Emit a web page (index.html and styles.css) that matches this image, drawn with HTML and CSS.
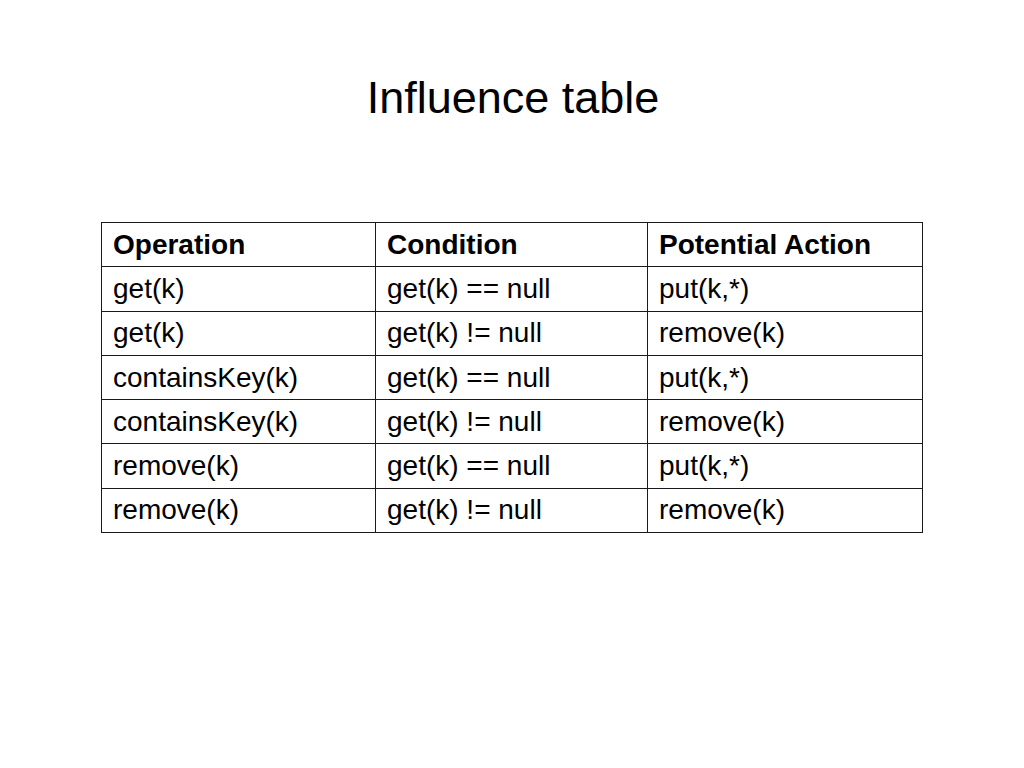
FILE: index.html
```html
<!DOCTYPE html>
<html>
<head>
<meta charset="utf-8">
<link rel="stylesheet" href="styles.css">
</head>
<body>
<div class="slide">
  <h1 class="title">Influence table</h1>
  <table class="influence">
    <colgroup><col class="c1"><col class="c2"><col class="c3"></colgroup>
    <thead>
      <tr><th>Operation</th><th>Condition</th><th>Potential Action</th></tr>
    </thead>
    <tbody>
      <tr><td>get(k)</td><td>get(k) == null</td><td>put(k,*)</td></tr>
      <tr><td>get(k)</td><td>get(k) != null</td><td>remove(k)</td></tr>
      <tr><td>containsKey(k)</td><td>get(k) == null</td><td>put(k,*)</td></tr>
      <tr><td>containsKey(k)</td><td>get(k) != null</td><td>remove(k)</td></tr>
      <tr><td>remove(k)</td><td>get(k) == null</td><td>put(k,*)</td></tr>
      <tr><td>remove(k)</td><td>get(k) != null</td><td>remove(k)</td></tr>
    </tbody>
  </table>
</div>
</body>
</html>
```

FILE: styles.css
```css
html, body {
  margin: 0;
  padding: 0;
  background: #ffffff;
}
body {
  font-family: "Liberation Sans", Arial, sans-serif;
  color: #000;
}
.slide {
  width: 1024px;
  height: 768px;
  display: flex;
  flex-direction: column;
  align-items: center;
}
.title {
  margin: 72px 0 0 0;
  font-size: 45px;
  font-weight: normal;
  line-height: 51px;
  text-align: center;
  padding-left: 2px;
}
.influence {
  margin-top: 99px;
  width: 821px;
  border-collapse: collapse;
  table-layout: fixed;
  font-size: 28px;
}
.c1 { width: 274px; }
.c2 { width: 272px; }
.c3 { width: 275px; }
.influence th,
.influence td {
  border: 1px solid #1a1a1a;
  height: 43.3px;
  padding: 0 0 0 11px;
  text-align: left;
  vertical-align: middle;
  line-height: 30px;
  white-space: nowrap;
}
.influence th {
  font-weight: bold;
}
```
